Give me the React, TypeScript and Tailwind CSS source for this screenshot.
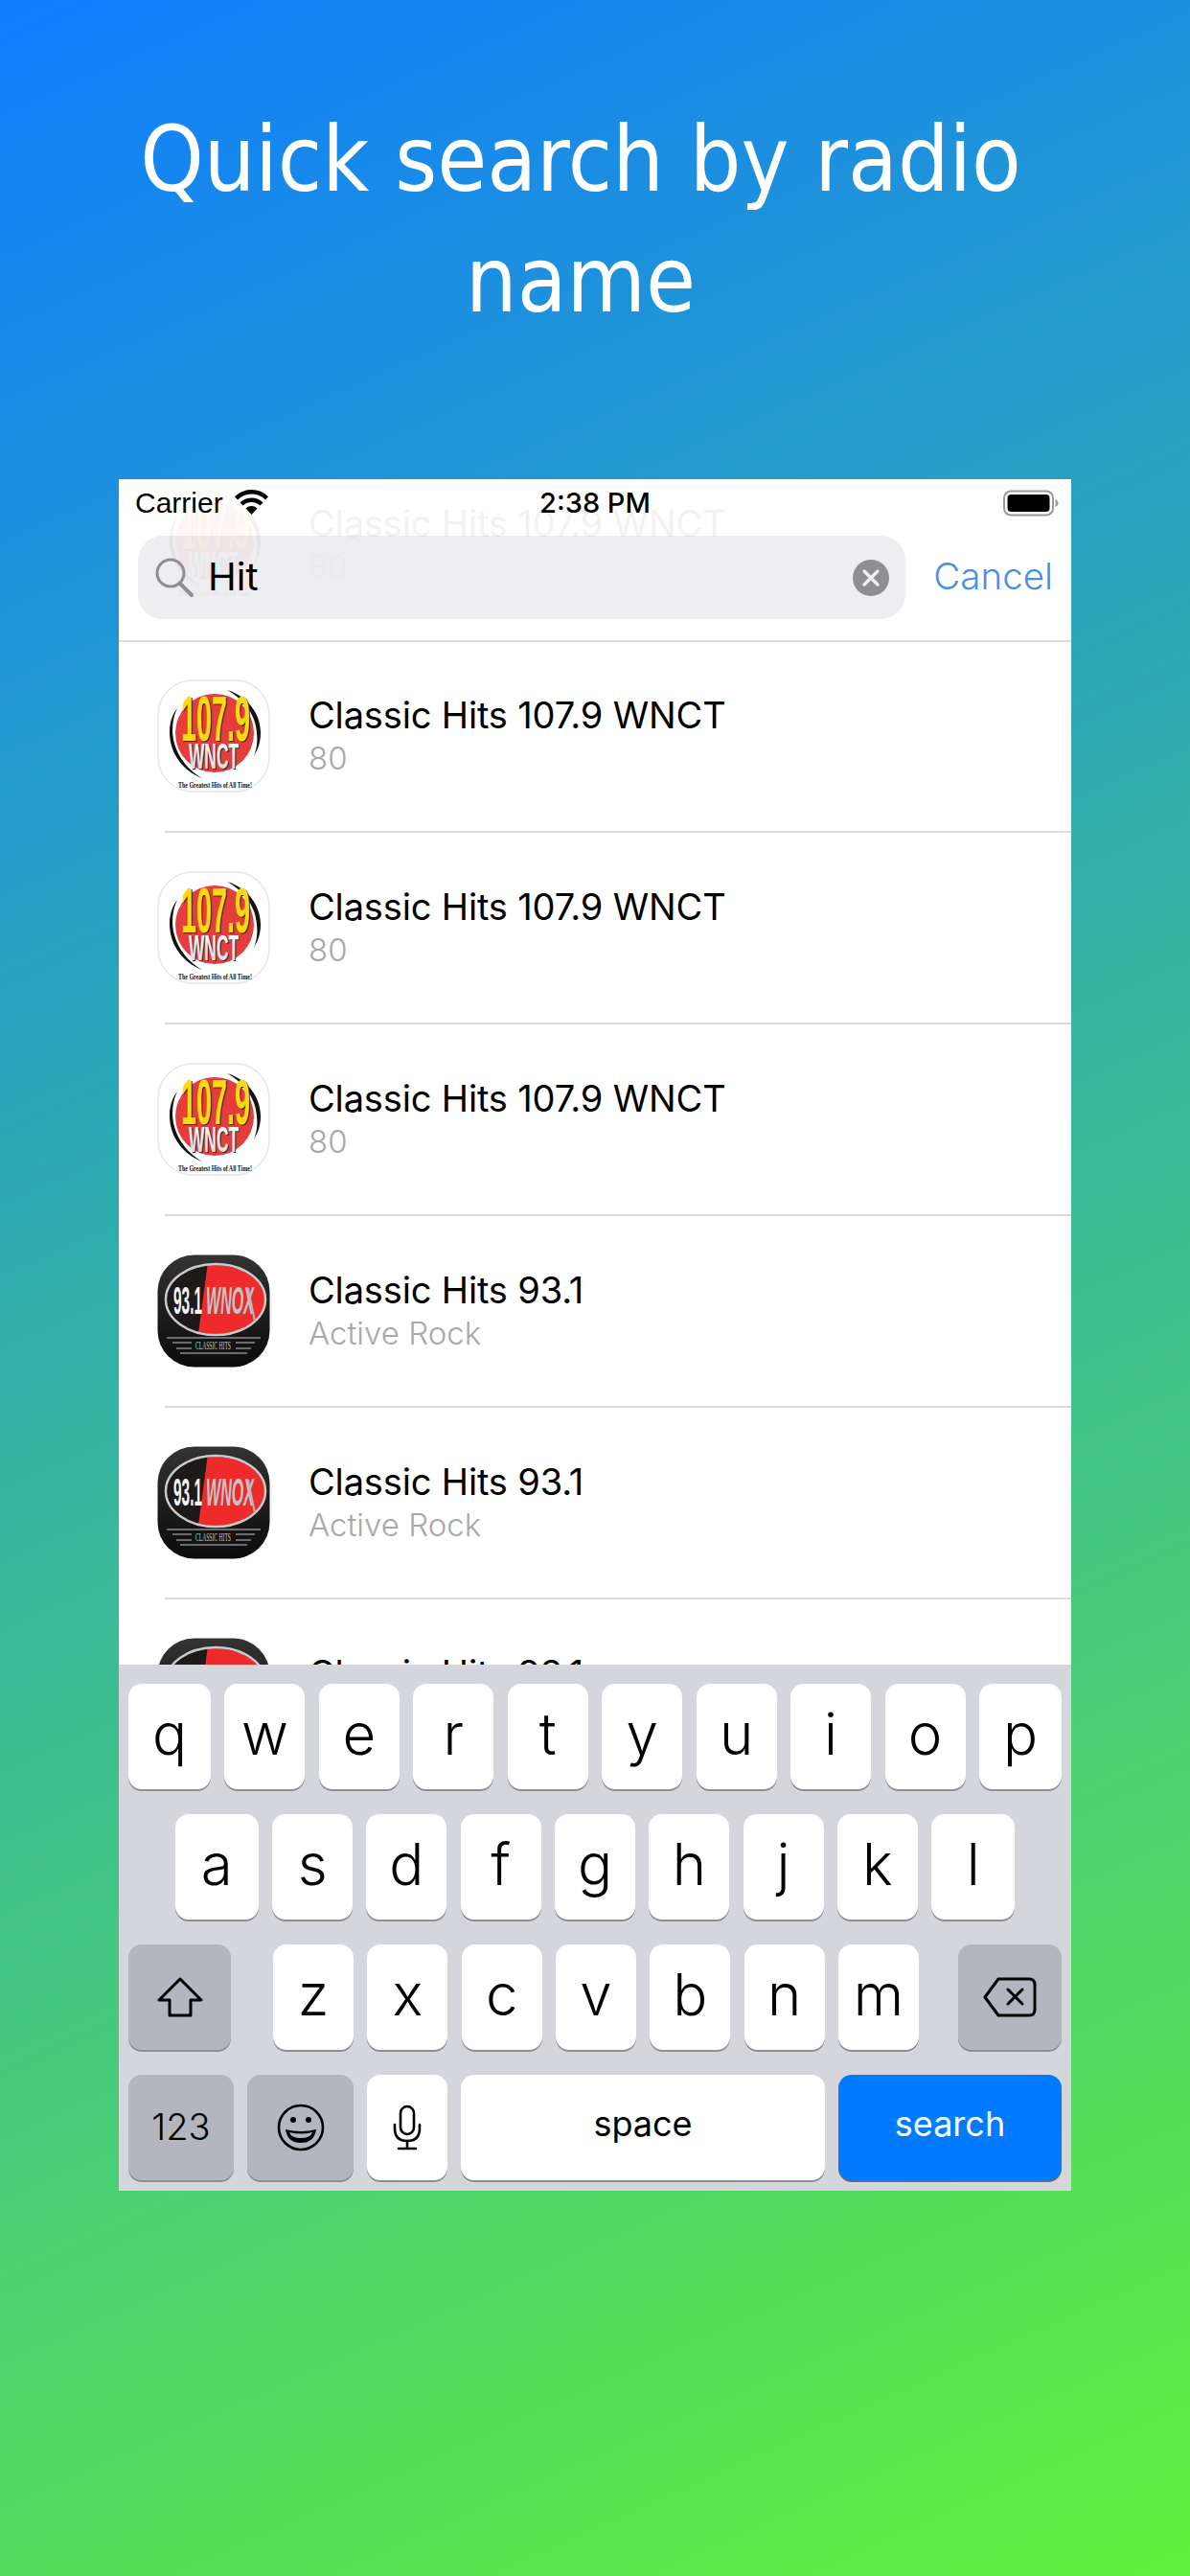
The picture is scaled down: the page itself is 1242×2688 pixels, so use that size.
const inter = "font-['Inter',sans-serif]";

function Logo107({ id }: { id: string }) {
  return (
    <svg width="118" height="118" viewBox="0 0 118 118" className="shrink-0">
      <defs>
        <linearGradient id={id} x1="0" y1="0" x2="0" y2="1">
          <stop offset="0" stopColor="#ffffff" />
          <stop offset="1" stopColor="#d8d8d8" />
        </linearGradient>
      </defs>
      <rect x="1" y="1" width="116" height="116" rx="36" fill="#fff" stroke="#e6e6e6" strokeWidth="1.5" />
      <circle cx="60" cy="56" r="41" fill="#e63c3c" />
      <path d="M47 103 C28 96 13 78 13 55 C13 45 16 36 21 30 C17 38 16 46 16 54 C17 76 30 93 47 103Z" fill="#111" />
      <path d="M73 11 C93 17 108 34 108 56 C108 66 105 73 101 80 C104 72 105 65 104 56 C103 37 91 21 73 11Z" fill="#111" />
      <text x="26" y="65" textLength="72" lengthAdjust="spacingAndGlyphs" fontFamily="Liberation Sans" fontWeight="700" fontSize="66" fill="#3a2410">107.9</text>
      <text x="25" y="64" textLength="72" lengthAdjust="spacingAndGlyphs" fontFamily="Liberation Sans" fontWeight="700" fontSize="66" fill="#fdd90f">107.9</text>
      <text x="34" y="94" textLength="52" lengthAdjust="spacingAndGlyphs" fontFamily="Liberation Sans" fontWeight="700" fontSize="37" fill="#333">WNCT</text>
      <text x="33" y="93" textLength="52" lengthAdjust="spacingAndGlyphs" fontFamily="Liberation Sans" fontWeight="700" fontSize="37" fill={`url(#${id})`}>WNCT</text>
      <text x="22" y="113" textLength="77" lengthAdjust="spacingAndGlyphs" fontFamily="Liberation Serif" fontWeight="700" fontSize="9" fill="#111">The Greatest Hits of All Time!</text>
    </svg>
  );
}

function Logo93({ id }: { id: string }) {
  return (
    <svg width="118" height="118" viewBox="0 0 118 118" className="shrink-0">
      <defs>
        <linearGradient id={id} x1="0" y1="0" x2="0" y2="1">
          <stop offset="0" stopColor="#333333" />
          <stop offset="0.5" stopColor="#1d1d1d" />
          <stop offset="1" stopColor="#0c0c0c" />
        </linearGradient>
        <clipPath id={`${id}-oval`}>
          <ellipse cx="61" cy="47" rx="51" ry="36" />
        </clipPath>
      </defs>
      <rect x="0.5" y="0.5" width="117" height="117" rx="38" fill={`url(#${id})`} />
      <g clipPath={`url(#${id}-oval)`}>
        <rect x="0" y="0" width="118" height="118" fill="#1e1a1a" />
        <path d="M53 8 L120 8 L120 90 L42 90Z" fill="#ee2a2a" />
      </g>
      <ellipse cx="61" cy="47" rx="52" ry="37" fill="none" stroke="#c9c9c9" strokeWidth="2.5" />
      <text x="17" y="62" textLength="30" lengthAdjust="spacingAndGlyphs" fontFamily="Liberation Sans" fontWeight="700" fontSize="40" fill="#f2f2f2">93.1</text>
      <text x="51" y="62" textLength="50" lengthAdjust="spacingAndGlyphs" fontFamily="Liberation Sans" fontWeight="700" fontStyle="italic" fontSize="40" fill="#c4c4c4">WNOX</text>
      <path d="M95 35 L102 70" stroke="#b5b5b5" strokeWidth="2" />
      <path d="M10 87 H108 M16 92 H36 M82 92 H102 M20 98 H36 M82 98 H98 M24 103 H94" stroke="#8a8a8a" strokeWidth="1.5" />
      <rect x="38" y="89" width="41" height="12" fill="#141414" />
      <text x="40" y="99" textLength="37" lengthAdjust="spacingAndGlyphs" fontFamily="Liberation Serif" fontSize="12" fill="#c8c8c8">CLASSIC HITS</text>
    </svg>
  );
}

function StationRow({ kind, id, name, genre }: { kind: "wnct" | "wnox"; id: string; name: string; genre: string }) {
  return (
    <div className="h-[198px] flex items-center pl-[40px]">
      {kind === "wnct" ? <Logo107 id={id} /> : <Logo93 id={id} />}
      <div className={`ml-[40px] ${inter}`}>
        <p className="text-[38px] leading-[46px] text-black tracking-[-0.15px]">{name}</p>
        <p className="text-[33px] leading-[44px] text-[#a8a8a8] font-light">{genre}</p>
      </div>
    </div>
  );
}

function Key({ label, className = "w-[84px]" }: { label: string; className?: string }) {
  return (
    <div className={`h-[110px] rounded-[14px] bg-white shadow-[0_2px_0_#8e8e93] flex items-center justify-center pb-[6px] text-[60px] font-light text-black ${inter} ${className}`}>
      {label}
    </div>
  );
}

const grayKey = "h-[110px] rounded-[14px] bg-[#b3b6bf] shadow-[0_2px_0_#8e8e93] flex items-center justify-center";

export default function App() {
  const stations = [
    { kind: "wnct" as const, name: "Classic Hits 107.9 WNCT", genre: "80" },
    { kind: "wnct" as const, name: "Classic Hits 107.9 WNCT", genre: "80" },
    { kind: "wnct" as const, name: "Classic Hits 107.9 WNCT", genre: "80" },
    { kind: "wnct" as const, name: "Classic Hits 107.9 WNCT", genre: "80" },
    { kind: "wnox" as const, name: "Classic Hits 93.1", genre: "Active Rock" },
    { kind: "wnox" as const, name: "Classic Hits 93.1", genre: "Active Rock" },
    { kind: "wnox" as const, name: "Classic Hits 93.1", genre: "Active Rock" },
  ];
  const row1 = "qwertyuiop".split("");
  const row2 = "asdfghjkl".split("");

  return (
    <main className="w-[1242px] h-[2688px] flex flex-col items-center bg-[linear-gradient(156deg,#0f7dff_0%,#60f03c_100%)]">
      {/* Title */}
      <div className="h-[500px] w-full shrink-0 pt-[104px] pl-[121px]">
        <h1 className="w-[970px] text-center text-white text-[94px] leading-[126px] font-['DejaVu_Sans_Condensed','DejaVu_Sans',sans-serif] font-normal">
          Quick search by radio name
        </h1>
      </div>

      {/* Phone */}
      <div className="relative w-[994px] h-[1786px] bg-white flex flex-col overflow-hidden">
        <div className="flex-1 min-h-0 overflow-hidden">
          <div className="-mt-[31px]">
            {stations.map((s, i) => (
              <div key={i}>
                <StationRow kind={s.kind} id={`logo-${i}`} name={s.name} genre={s.genre} />
                <div className="ml-[48px] h-[2px] bg-[#dcdcde]"></div>
              </div>
            ))}
          </div>
        </div>

        {/* Status bar + search */}
        <div className="absolute top-0 left-0 right-0 h-[170px] bg-white/95 border-b-2 border-[#dcdcde]">
          <div className="h-[59px] grid grid-cols-3 items-center pl-[17px] pr-[13px] pb-[10px]">
            <div className="flex items-center gap-[11px]">
              <span className="text-[30px] text-black font-['Liberation_Sans',sans-serif]">Carrier</span>
              <svg width="37" height="27" viewBox="0 0 36 27">
                <path d="M18 26 L12 19.5 A8.5 8.5 0 0 1 24 19.5Z" fill="#000" />
                <path d="M7.5 15 A15 15 0 0 1 28.5 15" fill="none" stroke="#000" strokeWidth="4.4" />
                <path d="M2 8.8 A23 23 0 0 1 34 8.8" fill="none" stroke="#000" strokeWidth="4.4" />
              </svg>
            </div>
            <span className={`text-center text-[29px] font-medium text-black pr-[4px] ${inter}`}>2:38 PM</span>
            <div className="flex justify-end">
              <svg width="58" height="28" viewBox="0 0 58 28">
                <rect x="1" y="1.5" width="51" height="25" rx="7" fill="none" stroke="#999" strokeWidth="2" />
                <rect x="4.5" y="5" width="44" height="18" rx="4" fill="#000" />
                <path d="M54.5 10 C56.5 11 57.5 12.5 57.5 14 C57.5 15.5 56.5 17 54.5 18Z" fill="#999" />
              </svg>
            </div>
          </div>
          <div className="flex items-center pl-[20px] pr-[19px] pb-[2px]">
            <div className="w-[801px] h-[87px] rounded-[26px] bg-[#7676801f] flex items-center pl-[18px] pr-[17px]">
              <svg width="40" height="42" viewBox="0 0 40 42" fill="none" stroke="#8e8e93" strokeWidth="3">
                <circle cx="16" cy="16" r="14" />
                <path d="M26 27 L38 39" strokeWidth="4" strokeLinecap="round" />
              </svg>
              <span className={`ml-[15px] text-[40px] text-black pb-[2px] ${inter}`}>Hit</span>
              <div className="ml-auto w-[38px] h-[38px] rounded-full bg-[#8e8e93] flex items-center justify-center">
                <svg width="20" height="20" viewBox="0 0 20 20" stroke="#efefef" strokeWidth="3.4" strokeLinecap="round">
                  <path d="M3 3 L17 17 M17 3 L3 17" />
                </svg>
              </div>
            </div>
            <span className={`ml-auto text-[38.5px] text-[#4a90e2] font-light pb-[2px] ${inter}`}>Cancel</span>
          </div>
        </div>

        {/* Keyboard */}
        <div className="relative h-[549px] shrink-0 bg-[#d4d6db] pt-[20px] px-[10px] flex flex-col gap-[26px]">
          <div className="flex justify-between">
            {row1.map((k, i) => (
              <Key key={k} label={k} className={i === 0 || i === 9 ? "w-[86px]" : "w-[84px]"} />
            ))}
          </div>
          <div className="flex justify-center gap-[14.3px]">
            {row2.map((k, i) => (
              <Key key={k} label={k} className={i === 0 || i === 8 ? "w-[87px]" : "w-[84px]"} />
            ))}
          </div>
          <div className="flex">
            <div className={`${grayKey} w-[107px]`}>
              <svg width="50" height="44" viewBox="0 0 50 44" fill="none" stroke="#000" strokeWidth="3" strokeLinejoin="round">
                <path d="M25 3 L47 25 H36 V41 H14 V25 H3Z" />
              </svg>
            </div>
            <div className="ml-[44px] flex gap-[14.33px]">
              {"zxcvbnm".split("").map((k) => (
                <Key key={k} label={k} />
              ))}
            </div>
            <div className={`${grayKey} ml-auto w-[108px]`}>
              <svg width="56" height="42" viewBox="0 0 56 42" fill="none" stroke="#000" strokeWidth="3" strokeLinejoin="round">
                <path d="M16 2 H48 Q54 2 54 8 V34 Q54 40 48 40 H16 L2 21Z" />
                <path d="M26 13 L41 28 M41 13 L26 28" strokeLinecap="round" />
              </svg>
            </div>
          </div>
          <div className="flex gap-[14px]">
            <div className={`${grayKey} w-[110px] text-[38px] text-black font-light pb-[2px] ${inter}`}>123</div>
            <div className={`${grayKey} w-[111px]`}>
              <svg width="50" height="50" viewBox="0 0 50 50">
                <circle cx="25" cy="25" r="23" fill="none" stroke="#000" strokeWidth="2.6" />
                <circle cx="17" cy="17" r="3" fill="#000" />
                <circle cx="33" cy="17" r="3" fill="#000" />
                <path d="M9 27 Q25 31 41 27 Q39 41 25 41 Q11 41 9 27Z" fill="#000" />
                <path d="M13 30 Q25 33 37 30 Q35 36 25 36 Q15 36 13 30Z" fill="#b3b6bf" />
              </svg>
            </div>
            <div className="w-[84px] h-[110px] rounded-[14px] bg-white shadow-[0_2px_0_#8e8e93] flex items-center justify-center">
              <svg width="30" height="48" viewBox="0 0 30 48" fill="none" stroke="#000" strokeWidth="2.6" strokeLinecap="round">
                <rect x="8" y="2" width="14" height="29" rx="7" />
                <path d="M2 21 V25 Q2 38 15 38 Q28 38 28 25 V21" />
                <path d="M15 38 V46 M6 46 H24" />
              </svg>
            </div>
            <div className={`flex-1 h-[110px] rounded-[14px] bg-white shadow-[0_2px_0_#8e8e93] flex items-center justify-center text-[36px] text-black pb-[8px] ${inter}`}>
              space
            </div>
            <div className={`w-[233px] h-[110px] rounded-[14px] bg-[#007aff] shadow-[0_2px_0_#6b6b70] flex items-center justify-center text-[36px] text-white pb-[8px] ${inter}`}>
              search
            </div>
          </div>
        </div>
      </div>
    </main>
  );
}
